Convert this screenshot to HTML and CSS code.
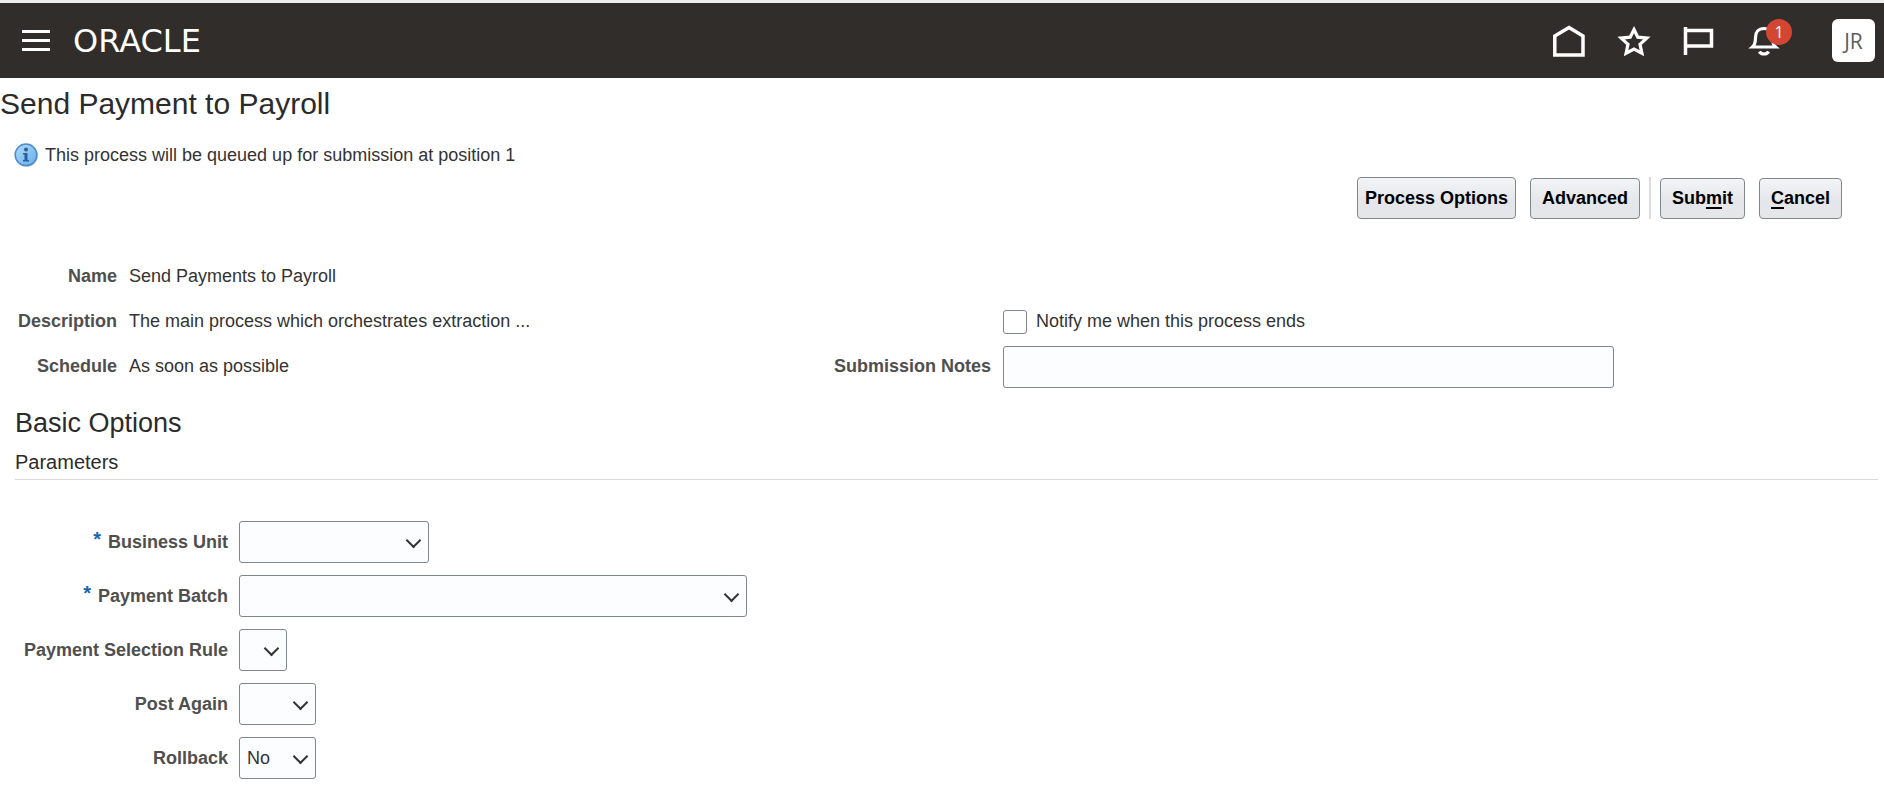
FILE: index.html
```html
<!DOCTYPE html>
<html lang="en">
<head>
    <meta charset="UTF-8">
    <meta name="viewport" content="width=device-width, initial-scale=1.0">
    <title>Send Payment to Payroll</title>
    <link rel="stylesheet" href="styles.css">
</head>
<body>
    <header class="topbar">
        <button class="icon-button menu" aria-label="Navigator">
            <svg width="30" height="24" viewBox="0 0 30 24" stroke="#fff" stroke-width="3">
                <path d="M1 2.5h28M1 11.5h28M1 20.5h28"/>
            </svg>
        </button>
        <a href="#" class="logo">ORACLE</a>
        <nav class="topbar-icons">
            <button class="icon-button" aria-label="Home">
                <svg width="34" height="34" viewBox="0 0 34 34" fill="none" stroke="#fff" stroke-width="3.5">
                    <path d="M2.800 31V12L17 3.500 31 12v19z"/>
                </svg>
            </button>
            <button class="icon-button" aria-label="Favorites">
                <svg width="34" height="34" viewBox="0 0 34 34" fill="none" stroke="#fff" stroke-width="3.2">
                    <path d="M17 5.500l3.800 7.700 9 .9-6.800 6.100 1.900 9L17 25l-7.900 4.200 1.900-9-6.800-6.100 9-.9z"/>
                </svg>
            </button>
            <button class="icon-button" aria-label="Watchlist">
                <svg width="34" height="34" viewBox="0 0 34 34" fill="none" stroke="#fff" stroke-width="3.5">
                    <path d="M3.500 3v28M3.500 6.500h26v15.500h-26"/>
                </svg>
            </button>
            <button class="icon-button bell" aria-label="Notifications">
                <svg width="34" height="34" viewBox="0 0 34 34" fill="none" stroke="#fff" stroke-width="3.2">
                    <path d="M5.500 23c2.800-2.500 3-5 3-9.500 0-5.500 3.200-9 8.500-9s8.500 3.500 8.500 9c0 4.500.2 7 3 9.500z"/>
                    <path d="M12.500 27.500c1.500 3.300 7.500 3.300 9 0"/>
                </svg>
                <span class="badge">1</span>
            </button>
        </nav>
        <button class="avatar">JR</button>
    </header>

    <main>
        <h1>Send Payment to Payroll</h1>

        <div class="info">
            <svg width="24" height="24" viewBox="0 0 24 24">
                <defs>
                    <linearGradient id="info-fill" x1="0" y1="0" x2="1" y2="1">
                        <stop offset="0" stop-color="#b4dcfa"/>
                        <stop offset="1" stop-color="#64aeea"/>
                    </linearGradient>
                </defs>
                <circle cx="12.800" cy="12.800" r="11" fill="#b9bec4"/>
                <circle cx="12" cy="11.800" r="10.800" fill="url(#info-fill)" stroke="#4a8ccb" stroke-width="1.500"/>
                <circle cx="12" cy="6.500" r="2" fill="#2a5f9e"/>
                <path d="M9 10h4.500v7h1.500v1.500H9V17h1.500v-5.500H9z" fill="#2a5f9e"/>
            </svg>
            <span>This process will be queued up for submission at position 1</span>
        </div>

        <div class="toolbar">
            <button class="btn btn-options">Process Options</button>
            <button class="btn">Advanced</button>
            <span class="separator"></span>
            <button class="btn">Sub<u>m</u>it</button>
            <button class="btn"><u>C</u>ancel</button>
        </div>

        <section class="details">
            <div class="details-left">
                <div class="row"><span class="label">Name</span><span>Send Payments to Payroll</span></div>
                <div class="row"><span class="label">Description</span><span>The main process which orchestrates extraction ...</span></div>
                <div class="row"><span class="label">Schedule</span><span>As soon as possible</span></div>
            </div>
            <div class="details-right">
                <div class="row">
                    <span class="label"></span>
                    <input type="checkbox" id="notify" class="checkbox">
                    <label for="notify">Notify me when this process ends</label>
                </div>
                <div class="row">
                    <label class="label" for="notes">Submission Notes</label>
                    <input type="text" id="notes" class="field notes">
                </div>
            </div>
        </section>

        <section class="options">
            <h2>Basic Options</h2>
            <h3>Parameters</h3>
            <form class="parameters">
                <div class="param">
                    <label class="label" for="business-unit"><span class="required">*</span> Business Unit</label>
                    <span class="select w-medium"><select id="business-unit" class="field"><option></option></select></span>
                </div>
                <div class="param">
                    <label class="label" for="payment-batch"><span class="required">*</span> Payment Batch</label>
                    <span class="select w-large"><select id="payment-batch" class="field"><option></option></select></span>
                </div>
                <div class="param">
                    <label class="label" for="selection-rule">Payment Selection Rule</label>
                    <span class="select w-tiny"><select id="selection-rule" class="field"><option></option></select></span>
                </div>
                <div class="param">
                    <label class="label" for="post-again">Post Again</label>
                    <span class="select w-small"><select id="post-again" class="field"><option></option><option>Yes</option><option>No</option></select></span>
                </div>
                <div class="param">
                    <label class="label" for="rollback">Rollback</label>
                    <span class="select w-small"><select id="rollback" class="field"><option>No</option><option>Yes</option></select></span>
                </div>
            </form>
        </section>
    </main>
</body>
</html>
```
FILE: styles.css
```css
* {
    box-sizing: border-box;
}

body {
    margin: 0;
    font-family: "Liberation Sans", Arial, sans-serif;
    font-size: 18px;
    color: #333333;
    background: #ffffff;
}

button, input, select {
    font-family: inherit;
    font-size: 18px;
    margin: 0;
}

/* Top bar */
.topbar {
    display: flex;
    align-items: center;
    height: 78px;
    padding: 0 9px 0 21px;
    background: #312d2a;
    border-top: 3px solid #ededed;
}

.icon-button {
    position: relative;
    display: flex;
    padding: 0;
    border: none;
    background: none;
    cursor: pointer;
}

.logo {
    margin-left: 22px;
    font-family: "DejaVu Sans", sans-serif;
    font-size: 32px;
    line-height: 40px;
    color: #ffffff;
    text-decoration: none;
}

.topbar-icons {
    display: flex;
    gap: 31px;
    margin-left: auto;
}

.badge {
    position: absolute;
    top: -5px;
    right: -11px;
    width: 26px;
    height: 26px;
    border-radius: 50%;
    background: #d24632;
    color: #ffffff;
    font-family: "Open Sans", sans-serif;
    font-size: 16px;
    line-height: 26px;
    text-align: center;
}

.avatar {
    width: 43px;
    height: 43px;
    margin-left: 51px;
    padding: 0;
    border: none;
    border-radius: 6px;
    background: #ffffff;
    color: #5c5c5c;
    font-family: "Open Sans", sans-serif;
    font-size: 21px;
}

/* Page heading and message */
h1, h2, h3 {
    margin: 0;
    font-weight: normal;
    color: #2b2b2b;
}

h1 {
    font-size: 30px;
    line-height: 52px;
}

.info {
    display: flex;
    align-items: center;
    gap: 7px;
    height: 47px;
    padding: 3px 0 0 14px;
}

/* Buttons */
.toolbar {
    display: flex;
    justify-content: flex-end;
    align-items: flex-end;
    gap: 14px;
    padding-right: 42px;
}

.btn {
    height: 41px;
    padding: 0 11px;
    border: 1px solid #80868e;
    border-radius: 4px;
    background: linear-gradient(#f3f4f6, #e4e6ea 60%);
    color: #000000;
    font-weight: bold;
    white-space: nowrap;
    cursor: pointer;
}

.btn-options {
    height: 42px;
    padding: 0 7px;
}

.btn u {
    text-decoration-thickness: 2px;
    text-underline-offset: 3px;
}

.separator {
    width: 2px;
    height: 42px;
    margin: 0 -5px;
    background: #dcdcdc;
}

/* Process details */
.label {
    flex-shrink: 0;
    text-align: right;
    font-weight: bold;
    color: #4f4f4f;
}

.details {
    display: grid;
    grid-template-columns: 44% 1fr;
    margin-top: 35px;
}

.row {
    display: flex;
    align-items: center;
    gap: 12px;
    height: 45px;
}

.details-left .label {
    width: 117px;
}

.details-right {
    padding: 45px 42px 0 0;
}

.details-right .label {
    width: 162px;
}

.field {
    height: 42px;
    border: 1px solid #80868e;
    border-radius: 3px;
    background: #fbfdfe;
    color: #333333;
}

.notes {
    width: 611px;
    min-width: 0;
    padding: 0 8px;
}

.checkbox {
    appearance: none;
    width: 24px;
    height: 24px;
    margin-right: -3px;
    border: 1px solid #80868e;
    border-radius: 3px;
    background: #ffffff;
}

/* Basic options */
.options {
    padding: 15px 6px 0 15px;
}

h2 {
    font-size: 27px;
    line-height: 38px;
}

h3 {
    height: 38px;
    padding-top: 2px;
    font-size: 20px;
    line-height: 36px;
    border-bottom: 1px solid #d9dadb;
}

.parameters {
    display: flex;
    flex-direction: column;
    gap: 12px;
    padding: 41px 0 18px;
}

.param {
    display: flex;
    align-items: center;
    gap: 11px;
}

.param .label {
    width: 213px;
}

.required {
    position: relative;
    top: -2px;
    margin-right: 2px;
    color: #1b63a8;
    font-size: 20px;
    line-height: 18px;
}

.select {
    position: relative;
}

.select select {
    appearance: none;
    display: block;
    width: 100%;
    padding: 0 7px;
}

.select::after {
    content: "";
    position: absolute;
    top: 14px;
    right: 10px;
    width: 9px;
    height: 9px;
    border: solid #333333;
    border-width: 0 2px 2px 0;
    transform: rotate(45deg);
    pointer-events: none;
}

.w-tiny {
    width: 48px;
}

.w-small {
    width: 77px;
}

.w-medium {
    width: 190px;
}

.w-large {
    width: 508px;
}
```
